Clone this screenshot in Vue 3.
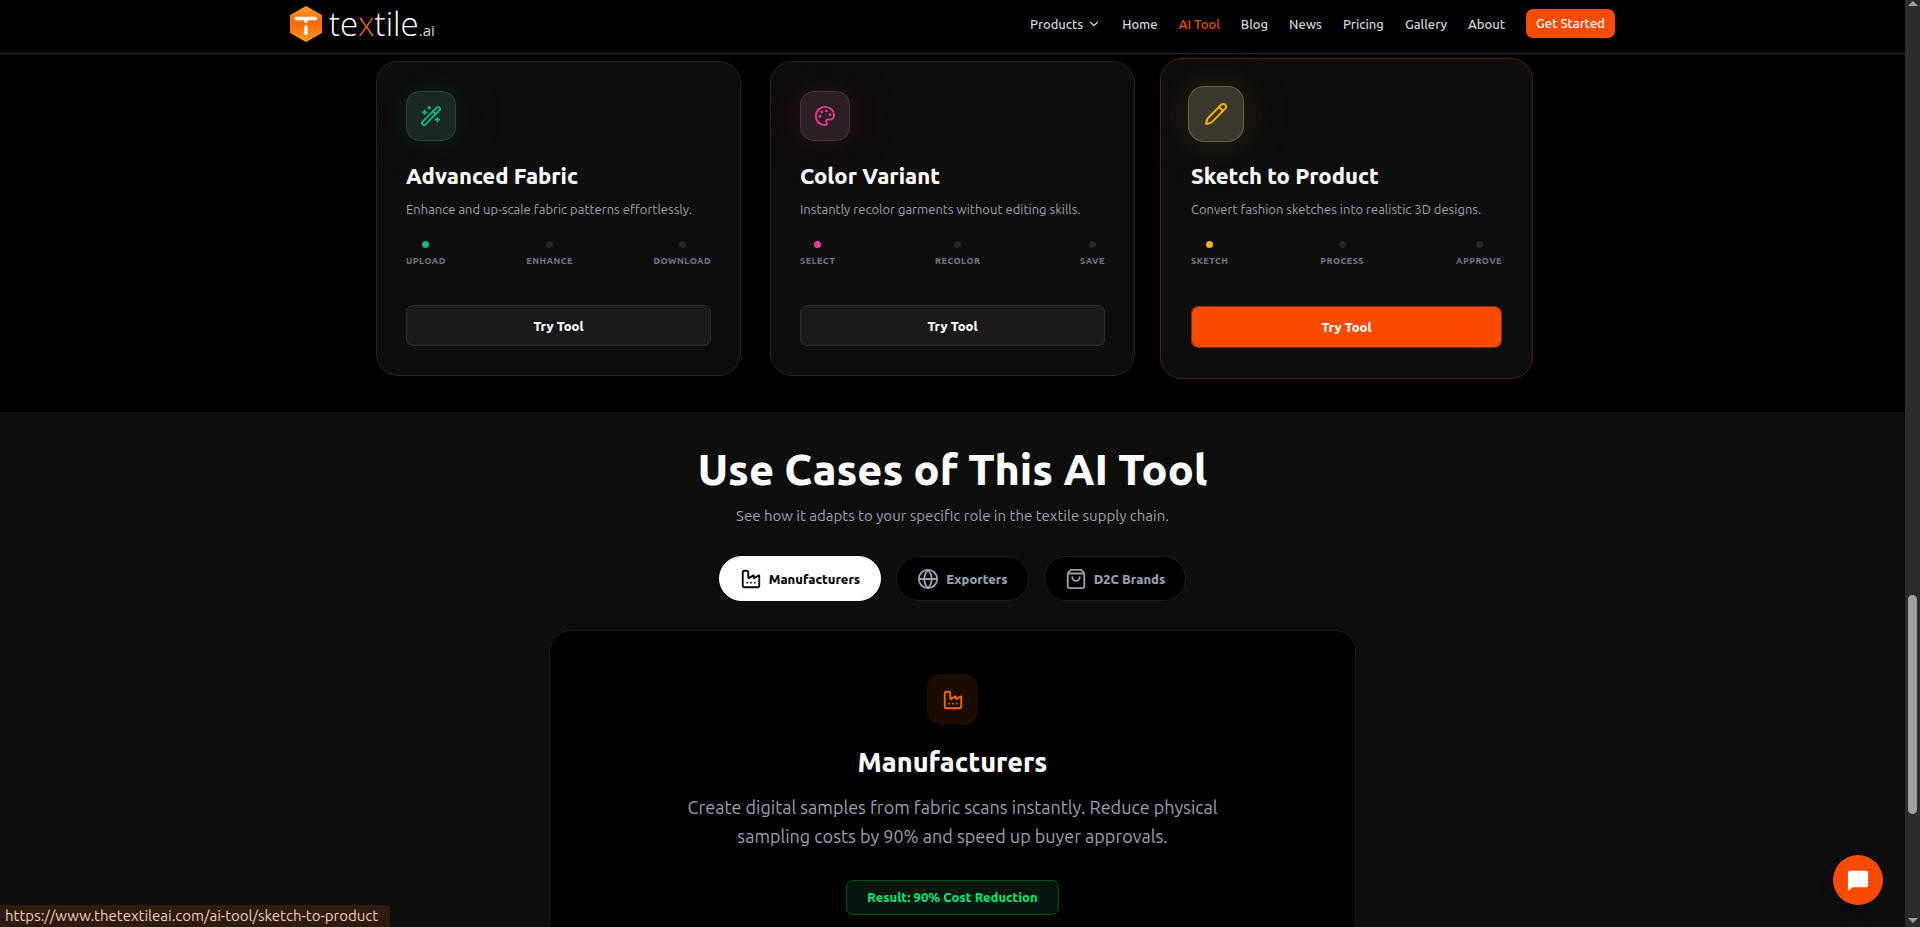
<script setup>
import { ref } from 'vue'

const links = ['Home', 'AI Tool', 'Blog', 'News', 'Pricing', 'Gallery', 'About']

const tools = [
  {
    key: 'fabric',
    title: 'Advanced Fabric',
    text: 'Enhance and up-scale fabric patterns effortlessly.',
    steps: ['Upload', 'Enhance', 'Download'],
    paths: [
      'm21.64 3.64-1.28-1.28a1.21 1.21 0 0 0-1.72 0L2.36 18.64a1.21 1.21 0 0 0 0 1.72l1.28 1.28a1.2 1.2 0 0 0 1.72 0L21.64 5.36a1.2 1.2 0 0 0 0-1.72',
      'm14 7 3 3', 'M5 6v4', 'M19 14v4', 'M10 2v2', 'M7 8H3', 'M21 16h-4', 'M11 3H9',
    ],
  },
  {
    key: 'color',
    title: 'Color Variant',
    text: 'Instantly recolor garments without editing skills.',
    steps: ['Select', 'Recolor', 'Save'],
    paths: [
      'M12 22a1 1 0 0 1 0-20 10 9 0 0 1 10 9 5 5 0 0 1-5 5h-2.25a1.75 1.75 0 0 0-1.4 2.8l.3.4a1.75 1.75 0 0 1-1.4 2.8z',
      'M14 6.5a.5.5 0 1 1-1 0 .5.5 0 0 1 1 0', 'M18 10.5a.5.5 0 1 1-1 0 .5.5 0 0 1 1 0',
      'M7 12.5a.5.5 0 1 1-1 0 .5.5 0 0 1 1 0', 'M9 7.5a.5.5 0 1 1-1 0 .5.5 0 0 1 1 0',
    ],
  },
  {
    key: 'sketch',
    title: 'Sketch to Product',
    text: 'Convert fashion sketches into realistic 3D designs.',
    steps: ['Sketch', 'Process', 'Approve'],
    active: true,
    paths: [
      'M21.174 6.812a1 1 0 0 0-3.986-3.987L3.842 16.174a2 2 0 0 0-.5.83l-1.321 4.352a.5.5 0 0 0 .623.622l4.353-1.32a2 2 0 0 0 .83-.497z',
      'm15 5 4 4',
    ],
  },
]

const cases = [
  {
    name: 'Manufacturers',
    text: 'Create digital samples from fabric scans instantly. Reduce physical sampling costs by 90% and speed up buyer approvals.',
    result: 'Result: 90% Cost Reduction',
    paths: [
      'M12 16h.01', 'M16 16h.01', 'M8 16h.01',
      'M3 19a2 2 0 0 0 2 2h14a2 2 0 0 0 2-2V8.5a.5.5 0 0 0-.769-.422l-4.462 2.844A.5.5 0 0 1 15 10.5v-2a.5.5 0 0 0-.769-.422L9.77 10.922A.5.5 0 0 1 9 10.5V5a2 2 0 0 0-2-2H5a2 2 0 0 0-2 2z',
    ],
  },
  {
    name: 'Exporters',
    paths: ['M22 12a10 10 0 1 1-20 0 10 10 0 1 1 20 0', 'M12 2a14.5 14.5 0 0 0 0 20 14.5 14.5 0 0 0 0-20', 'M2 12h20'],
  },
  {
    name: 'D2C Brands',
    paths: [
      'M16 10a4 4 0 0 1-8 0', 'M3.103 6.034h17.794',
      'M3.4 5.467a2 2 0 0 0-.4 1.2V20a2 2 0 0 0 2 2h14a2 2 0 0 0 2-2V6.667a2 2 0 0 0-.4-1.2l-2-2.667A2 2 0 0 0 17 2H7a2 2 0 0 0-1.6.8z',
    ],
  },
]
const picked = ref('Manufacturers')
const current = cases[0]
</script>

<template>
  <div class="window">
    <div class="page">
      <header class="header">
        <div class="bar">
          <a class="logo" href="#" aria-label="textile.ai">
            <svg class="mark" viewBox="0 0 32 36" aria-hidden="true">
              <defs>
                <linearGradient id="hex" x1="0" y1="0" x2="0" y2="1">
                  <stop offset="0" stop-color="#ff9a1f" />
                  <stop offset="0.5" stop-color="#ff6a0a" />
                  <stop offset="1" stop-color="#ff9a1f" />
                </linearGradient>
              </defs>
              <path d="M16 0 32 9v18L16 36 0 27V9z" fill="url(#hex)" />
              <path d="M6.500 12.500h19M16 15v.5M16 21v6.500" fill="none" stroke="#fff" stroke-width="3.400" stroke-linecap="round" />
            </svg>
            <span class="word">te<span class="x">x</span>tile<span class="tld">.ai</span></span>
          </a>
          <nav class="nav">
            <button class="products" type="button">
              Products
              <svg viewBox="0 0 24 24" class="chev" aria-hidden="true"><path d="m6 9 6 6 6-6" /></svg>
            </button>
            <a v-for="l in links" :key="l" href="#" :class="{ on: l === 'AI Tool' }">{{ l }}</a>
            <a class="start" href="#">Get Started</a>
          </nav>
        </div>
      </header>

      <section class="tools">
        <article v-for="t in tools" :key="t.key" class="card" :class="[t.key, { lifted: t.active }]">
          <div class="tile">
            <svg viewBox="0 0 24 24" class="icon" aria-hidden="true"><path v-for="p in t.paths" :key="p" :d="p" /></svg>
          </div>
          <h3>{{ t.title }}</h3>
          <p>{{ t.text }}</p>
          <ol class="steps">
            <li v-for="s in t.steps" :key="s">{{ s }}</li>
          </ol>
          <button class="try" type="button">Try Tool</button>
        </article>
      </section>

      <section class="cases">
        <h2>Use Cases of This AI Tool</h2>
        <p class="sub">See how it adapts to your specific role in the textile supply chain.</p>
        <div class="tabs">
          <button v-for="c in cases" :key="c.name" type="button" class="tab" :class="{ picked: c.name === picked }">
            <svg viewBox="0 0 24 24" class="icon" aria-hidden="true"><path v-for="p in c.paths" :key="p" :d="p" /></svg>
            {{ c.name }}
          </button>
        </div>
        <div class="panel">
          <div class="badge">
            <svg viewBox="0 0 24 24" class="icon" aria-hidden="true"><path v-for="p in current.paths" :key="p" :d="p" /></svg>
          </div>
          <h3>{{ current.name }}</h3>
          <p>{{ current.text }}</p>
          <span class="result">{{ current.result }}</span>
        </div>
      </section>
    </div>

    <div class="scroll" aria-hidden="true">
      <i class="up"></i>
      <div class="track"><div class="thumb"></div></div>
      <i class="down"></i>
    </div>

    <button class="chat" type="button" aria-label="Open chat">
      <svg viewBox="0 0 24 24" aria-hidden="true"><path d="M3 2h18a2 2 0 0 1 2 2v14a2 2 0 0 1-2 2H6l-3.500 3A1 1 0 0 1 1 22V4a2 2 0 0 1 2-2z" /></svg>
    </button>
    <div class="status">https://www.thetextileai.com/ai-tool/sketch-to-product</div>
  </div>
</template>

<style>
body { background: #000; }
</style>

<style scoped>
* { box-sizing: border-box; }
.window {
  display: flex;
  height: 100vh;
  overflow: hidden;
  background: #000;
  color: #fff;
  font-family: Ubuntu, "Noto Sans", "Open Sans", sans-serif;
}
h2, h3, p, ol { margin: 0; padding: 0; }
h2, h3 { font-weight: 800; }
button { font: inherit; color: inherit; border: 0; background: none; padding: 0; cursor: pointer; }
a { color: inherit; text-decoration: none; }
.icon, .chev { fill: none; stroke: currentColor; stroke-width: 2; stroke-linecap: round; stroke-linejoin: round; flex: none; }
.icon { width: 22px; height: 22px; }

.page { flex: 1; min-width: 0; display: flex; flex-direction: column; overflow: hidden; }
.header { flex: none; border-bottom: 1px solid #1e2939; }
.bar {
  display: flex;
  align-items: center;
  justify-content: space-between;
  max-width: 1325px;
  height: 53px;
  margin: 0 auto;
  padding-bottom: 6px;
}
.logo { display: flex; align-items: center; font-family: "Open Sans", sans-serif; }
.mark { width: 32px; height: 36px; margin-right: 7px; }
.word { padding-top: 6px; font-size: 33px; font-weight: 300; line-height: 46px; }
.x { color: transparent; background: linear-gradient(135deg, #f5a300 25%, #e8590c 50%, #f57c00 75%); background-clip: text; -webkit-background-clip: text; }
.tld { font-size: 15px; font-weight: 400; color: #d8d8d8; }
.nav { display: flex; align-items: center; gap: 21px; font-size: 13px; font-weight: 500; color: #d1d5dc; }
.products { display: flex; align-items: center; gap: 4px; }
.chev { width: 14px; height: 14px; }
.on { color: #f54900; }
.start { padding: 0 10px; border-radius: 7px; background: #f94b00; color: #fff; line-height: 29px; }

.tools {
  display: grid;
  grid-template-columns: repeat(3, 1fr);
  gap: 29px;
  width: 100%;
  max-width: 1153px;
  margin: 0 auto;
  padding: 7px 0 36px;
}
.card {
  --tint: #00bc7d;
  --glow: rgba(0, 188, 125, 0.08);
  display: flex;
  flex-direction: column;
  padding: 29px;
  border: 1px solid #252525;
  border-radius: 22px;
  background: #0d0d0d;
}
.color { --tint: #f6339a; --glow: rgba(246, 51, 154, 0.08); }
.sketch { --tint: #f0b100; --glow: rgba(240, 177, 0, 0.08); }
.tile {
  display: grid;
  place-items: center;
  width: 50px;
  height: 50px;
  border: 1px solid rgba(255, 255, 255, 0.1);
  border-radius: 14px;
  background: linear-gradient(rgba(255, 255, 255, 0.06), rgba(255, 255, 255, 0.06)), var(--glow);
  box-shadow: 0 0 60px 4px var(--glow), 0 0 36px var(--glow);
  color: var(--tint);
}
.card h3 { margin-top: 20px; font-size: 22px; line-height: 30px; }
.card p { margin-top: 8px; font-size: 13px; line-height: 20px; color: #99a1af; }
.steps {
  display: flex;
  justify-content: space-between;
  margin-top: 22px;
  list-style: none;
  font-size: 9px;
  line-height: 13px;
  font-weight: 800;
  letter-spacing: 0.05em;
  text-transform: uppercase;
  color: #6a7282;
}
.steps li { display: flex; flex-direction: column; align-items: center; gap: 7px; }
.steps li::before { content: ""; width: 7px; height: 7px; border-radius: 50%; background: #262626; }
.steps li:first-child::before { background: var(--tint); }
.try {
  height: 41px;
  margin-top: 37px;
  border: 1px solid #303030;
  border-radius: 7px;
  background: #1a1a1a;
  font-size: 13px;
  font-weight: 800;
}
.lifted { margin: -3px -4px; padding: 30px; border-color: #4d210b; }
.lifted .tile { width: 56px; height: 56px; margin: -3px; border-color: rgba(255, 255, 255, 0.2); border-radius: 16px; background: linear-gradient(rgba(255, 255, 255, 0.13), rgba(255, 255, 255, 0.13)), var(--glow); }
.lifted .icon { width: 24px; height: 24px; }
.lifted h3 { margin-top: 22px; }
.lifted p { margin-top: 8px; }
.lifted .steps { margin-top: 22px; }
.lifted .try { height: 42px; margin-top: 38px; border-color: #8a2f06; background: #f94b00; background-clip: padding-box; }

.cases { flex: 1 0 auto; background: #0d0d0d; padding: 30px 0; display: flex; flex-direction: column; align-items: center; text-align: center; }
.cases h2 { font-size: 43px; line-height: 54px; }
.sub { margin-top: 8px; font-size: 15px; line-height: 24px; color: #99a1af; }
.tabs { display: flex; gap: 15px; margin-top: 28px; }
.tab {
  display: flex;
  align-items: center;
  gap: 7px;
  height: 45px;
  padding: 0 20px;
  border: 1px solid #1a1a1a;
  border-radius: 23px;
  background: #000;
  color: #99a1af;
  font-size: 13px;
  font-weight: 800;
}
.picked { background: #fff; border-color: #fff; color: #000; }
.panel {
  display: flex;
  flex-direction: column;
  align-items: center;
  width: 100%;
  max-width: 807px;
  margin-top: 29px;
  padding: 43px 108px;
  border: 1px solid #1a1a1a;
  border-radius: 22px;
  background: #000;
}
.badge { display: grid; place-items: center; width: 51px; height: 51px; border-radius: 14px; background: #1c0b01; color: #ff6900; }
.panel h3 { margin-top: 20px; font-size: 27px; line-height: 34px; }
.panel p { margin-top: 14px; font-size: 18px; line-height: 29px; color: #99a1af; }
.result { margin-top: 29px; padding: 0 20px; border: 1px solid #05501f; border-radius: 7px; background: #03170c; color: #05df72; font-size: 13px; font-weight: 800; line-height: 33px; }

.scroll { flex: none; width: 15px; display: flex; flex-direction: column; align-items: center; background: #2c2c2c; }
.track { flex: 1; width: 9px; }
.thumb { height: 219px; margin-top: 581px; border-radius: 5px; background: #a0a0a0; }
.up, .down { border: 5px solid transparent; }
.up { margin: -4px 0 8px; border-bottom-color: #a0a0a0; }
.down { margin: 8px 0 -1px; border-top-color: #a0a0a0; }

.chat { position: fixed; right: 37px; bottom: 22px; display: grid; place-items: center; width: 50px; height: 50px; border-radius: 50%; background: #f94b00; box-shadow: 0 9px 14px rgba(0, 0, 0, 0.2); }
.chat svg { width: 22px; height: 22px; fill: #fff; }
.status { position: fixed; left: 0; bottom: 0; padding: 0 12px 0 5px; border-radius: 0 4px 0 0; background: #2e1a0e; color: #f3cfb3; font-size: 15px; line-height: 22px; }
</style>
